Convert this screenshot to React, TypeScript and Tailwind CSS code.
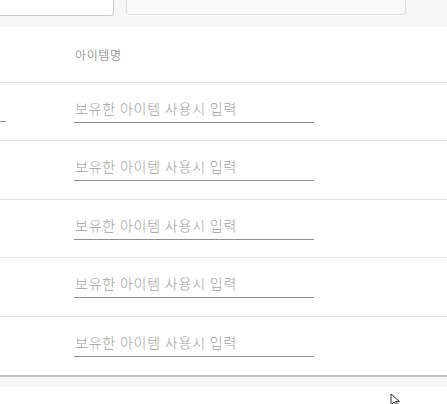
import React from 'react';

const rows = [0, 1, 2, 3, 4];

export default function App() {
  return (
    <div
      className="relative w-[447px] h-[404px] overflow-hidden bg-white"
      style={{ fontFamily: '"Noto Sans CJK KR", "Noto Sans", sans-serif' }}
    >
      {/* top filter strip */}
      <div className="h-[27px] bg-[#f7f7f7] flex gap-3 overflow-hidden">
        <div className="shrink-0 w-[122px] ml-[-8px] h-[16px] bg-white border border-[#c8c8c8] border-t-0 rounded-b-[4px]" />
        <div className="shrink-0 w-[280px] h-[15px] bg-[#f8f8f8] border border-[#dedede] border-t-0 rounded-b-[4px]" />
      </div>

      {/* table */}
      <div className="border-b-2 border-[#c4c4c4]">
        <div className="h-[56px] flex items-center border-b border-[#e2e2e2]">
          <div className="w-[75px] shrink-0" />
          <span className="text-[12px] font-light tracking-[0.6px] text-[#6b6b6b]">아이템명</span>
        </div>
        {rows.map((i) => (
          <div
            key={i}
            className={`h-[58.4px] flex ${i < rows.length - 1 ? 'border-b border-[#e2e2e2]' : ''}`}
          >
            <div className="w-[74px] shrink-0 pt-[38px]">
              {i === 0 && <div className="w-[6px] border-b border-[#8f8f8f]" />}
            </div>
            <div className="w-[240px] pt-[12px]">
              <div className="h-[28px] flex items-center pl-[1px] border-b border-[#8f8f8f] text-[14px] font-light tracking-[0.8px] text-[#a0a0a0]">
                보유한 아이템 사용시 입력
              </div>
            </div>
          </div>
        ))}
      </div>
      <div className="h-[10px] bg-[#f7f7f7]" />

      {/* mouse cursor */}
      <svg className="absolute left-[390px] top-[393px]" width="12" height="14" viewBox="0 0 12 14">
        <path d="M1 1 L1 12 L4 9 L6.5 13 L8 12 L5.5 8.5 L9.5 8.5 Z" fill="white" stroke="#333" strokeWidth="1" />
      </svg>
    </div>
  );
}
